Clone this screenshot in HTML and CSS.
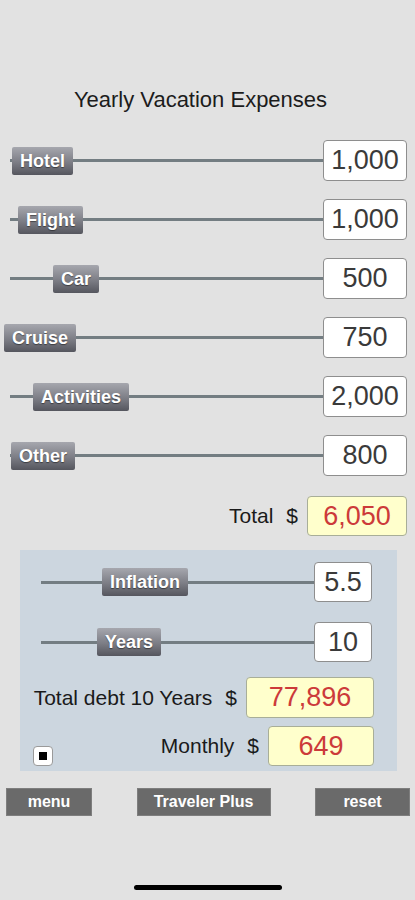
FILE: index.html
```html
<!DOCTYPE html>
<html lang="en">

<head>
    <meta charset="UTF-8">
    <meta name="viewport" content="width=device-width, initial-scale=1.0">
    <title>Yearly Vacation Expenses</title>

    <link rel="stylesheet" href="styles.css">

</head>

<body>

    <div class="screen">
        <h1 class="title">Yearly Vacation Expenses</h1>

        <div class="sliders">
            <div class="slider_row">
                <div class="track"><span class="thumb" style="left: 2px;">Hotel</span></div>
                <div class="num_box">1,000</div>
            </div>
            <div class="slider_row">
                <div class="track"><span class="thumb" style="left: 8px;">Flight</span></div>
                <div class="num_box">1,000</div>
            </div>
            <div class="slider_row">
                <div class="track"><span class="thumb" style="left: 43px;">Car</span></div>
                <div class="num_box">500</div>
            </div>
            <div class="slider_row">
                <div class="track"><span class="thumb" style="left: -6px;">Cruise</span></div>
                <div class="num_box">750</div>
            </div>
            <div class="slider_row">
                <div class="track"><span class="thumb" style="left: 23px;">Activities</span></div>
                <div class="num_box">2,000</div>
            </div>
            <div class="slider_row">
                <div class="track"><span class="thumb" style="left: 1px;">Other</span></div>
                <div class="num_box">800</div>
            </div>
        </div>

        <div class="total_row">
            <span class="lbl">Total</span>
            <span class="dollar">$</span>
            <div class="result_box total_box">6,050</div>
        </div>

        <!-- inflation panel -->
        <div class="panel">
            <div class="slider_row small">
                <div class="track"><span class="thumb" style="left: 61px;">Inflation</span></div>
                <div class="num_box">5.5</div>
            </div>
            <div class="slider_row small">
                <div class="track"><span class="thumb" style="left: 56px;">Years</span></div>
                <div class="num_box">10</div>
            </div>
            <div class="result_row debt_row">
                <span class="lbl">Total debt 10 Years</span>
                <span class="dollar">$</span>
                <div class="result_box debt_box">77,896</div>
            </div>
            <div class="result_row monthly_row">
                <span class="check"><span class="check_dot"></span></span>
                <span class="lbl push">Monthly</span>
                <span class="dollar">$</span>
                <div class="result_box monthly_box">649</div>
            </div>
        </div>

        <div class="buttons">
            <div class="btn menu_btn">menu</div>
            <div class="btn plus_btn">Traveler Plus</div>
            <div class="btn reset_btn">reset</div>
        </div>

        <div class="home_bar"></div>
    </div>

</body>

</html>
```

FILE: styles.css
```css
* {
    box-sizing: border-box;
    font-family: 'Liberation Sans', Arial, Helvetica, sans-serif;
}

body {
    margin: 0;
    background-color: #e2e2e2;
}

.screen {
    width: 415px;
    height: 900px;
    padding-top: 87px;
    overflow: hidden;
}

.title {
    margin: 0;
    font-size: 22px;
    font-weight: normal;
    line-height: 25px;
    color: #1c1c1c;
    text-align: center;
    padding-right: 14px;
}

.sliders {
    display: flex;
    flex-direction: column;
    gap: 18px;
    margin-top: 28px;
}

.slider_row {
    display: flex;
    align-items: center;
    height: 41px;
    padding-left: 10px;
    padding-right: 8px;
}

.track {
    flex: 1;
    position: relative;
    height: 3px;
    background-color: #737d82;
}

.thumb {
    position: absolute;
    top: 50%;
    transform: translateY(-50%);
    height: 28px;
    line-height: 28px;
    padding: 0 8px;
    color: white;
    font-size: 18px;
    font-weight: bold;
    white-space: nowrap;
    text-shadow: 0 1px 1px rgba(0, 0, 0, 0.45);
    background: linear-gradient(#a6a7ae, #7c7d85 55%, #55565e);
    border-radius: 2px;
}

.num_box {
    width: 84px;
    height: 41px;
    line-height: 39px;
    background-color: white;
    border: 1px solid #8e8e8e;
    border-radius: 4px;
    text-align: center;
    font-size: 27px;
    color: #3a3a3a;
}

.total_row,
.result_row {
    display: flex;
    align-items: center;
    justify-content: flex-end;
}

.total_row {
    margin-top: 20px;
    padding-right: 8px;
}

.lbl {
    font-size: 21px;
    color: #1a1a1a;
}

.dollar {
    font-size: 21px;
    color: #1a1a1a;
    margin-left: 13px;
    margin-right: 9px;
}

.result_box {
    height: 40px;
    line-height: 38px;
    background-color: #ffffcc;
    border: 1px solid #a8ae98;
    border-radius: 4px;
    text-align: center;
    font-size: 27px;
    color: #cc3a3a;
}

.total_box {
    width: 100px;
}

/* blue panel */
.panel {
    margin: 14px 18px 0 20px;
    padding: 12px 23px 5px 13px;
    background-color: #ccd6df;
}

.panel .slider_row {
    height: 40px;
    padding-left: 8px;
    padding-right: 2px;
    margin-bottom: 20px;
}

.panel .slider_row + .slider_row {
    margin-bottom: 15px;
}

.panel .num_box {
    width: 58px;
    height: 40px;
    line-height: 38px;
}

.debt_box {
    width: 128px;
    height: 41px;
    line-height: 39px;
}

.monthly_row {
    margin-top: 8px;
    align-items: center;
}

.monthly_box {
    width: 106px;
}

.push {
    margin-left: auto;
}

.check {
    display: flex;
    align-items: center;
    justify-content: center;
    width: 20px;
    height: 20px;
    margin-top: 19px;
    background-color: white;
    border: 1px solid #9a9a9a;
    border-radius: 4px;
}

.check_dot {
    width: 8px;
    height: 8px;
    background-color: black;
}

.buttons {
    display: flex;
    justify-content: space-between;
    margin-top: 17px;
    padding: 0 5px 0 6px;
}

.btn {
    height: 28px;
    line-height: 26px;
    background-color: #6a6a6a;
    border: 1px solid #7e7e7e;
    color: white;
    font-size: 16px;
    font-weight: bold;
    text-align: center;
}

.menu_btn {
    width: 86px;
}

.plus_btn {
    width: 134px;
}

.reset_btn {
    width: 95px;
}

.home_bar {
    width: 148px;
    height: 5px;
    margin: 69px auto 0;
    background-color: black;
    border-radius: 3px;
}
```
